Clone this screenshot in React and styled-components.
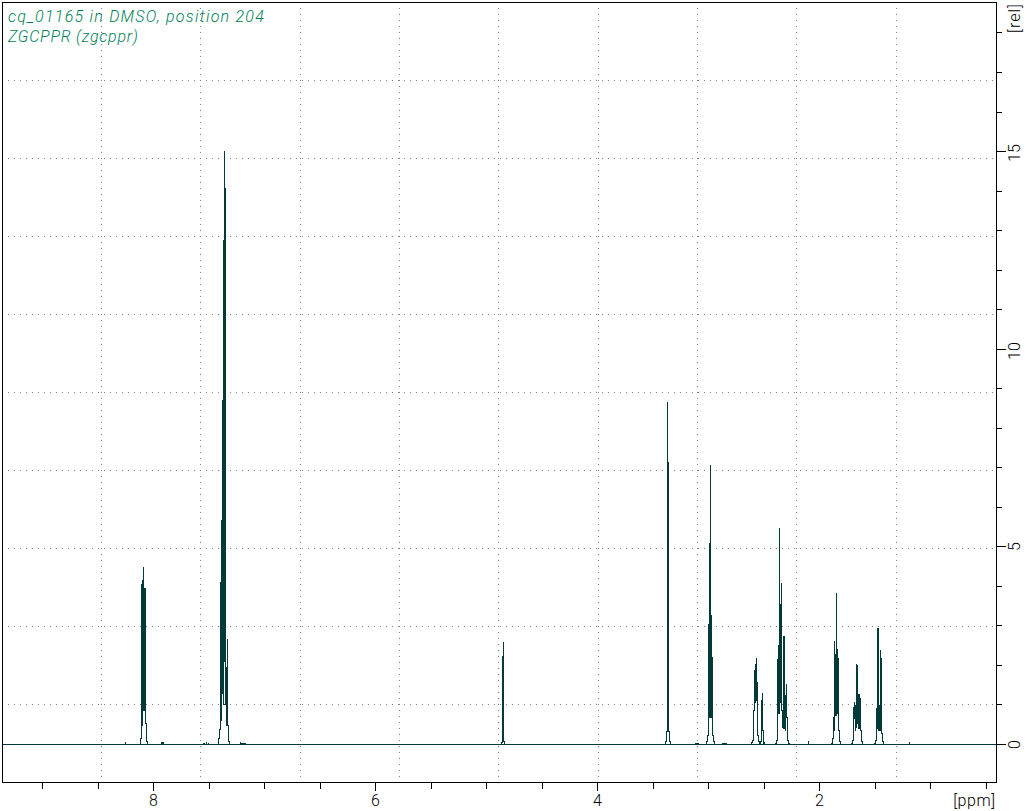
import React from "react";
import styled, { createGlobalStyle } from "styled-components";

const GlobalStyle = createGlobalStyle`
  html, body {
    margin: 0;
    padding: 0;
    background: #fff;
  }
`;

const Plot = styled.main`
  position: relative;
  width: 1027px;
  height: 811px;
  overflow: hidden;
  background: #fff;
`;

const Chart = styled.svg`
  display: block;
  width: 1027px;
  height: 811px;
  shape-rendering: crispEdges;
`;

const Caption = styled.header`
  position: absolute;
  top: 7px;
  left: 8px;
  font-family: Roboto, "Liberation Sans", sans-serif;
  font-size: 16px;
  font-style: italic;
  font-weight: 300;
  line-height: 20px;
  color: #007f58;
  white-space: nowrap;
`;

const CaptionLine = styled.div`
  letter-spacing: ${(p) => p.$spacing}px;
`;

const GridLine = styled.line`
  stroke: #808080;
  stroke-width: 1;
  stroke-dasharray: 1 5;
`;

const AxisLine = styled.path`
  fill: none;
  stroke: #000;
  stroke-width: 1;
`;

const Trace = styled.path`
  fill: none;
  stroke: #033a39;
  stroke-width: 1;
`;

const AxisLabel = styled.text`
  font-family: Roboto, "Liberation Sans", sans-serif;
  font-size: 16px;
  font-weight: 300;
  letter-spacing: ${(p) => p.$spacing || 0}px;
  fill: #000;
  text-anchor: middle;
`;

const BASE = 744;
const gridX = [101, 200, 300, 399, 498, 598, 697, 796, 896];
const gridY = [80, 158, 236, 314, 392, 470, 548, 626, 704];
const ppmLabels = { 2: "8", 6: "6", 10: "4", 14: "2" };
const relLabels = { 0: "0", 5: "5", 10: "10", 15: "15" };

// x, top, bottom of every pixel column that leaves the baseline
const columns = [
  [125, 742, 744],
  [140, 738, 744], [141, 584, 738], [142, 580, 725], [143, 567, 710], [144, 588, 710], [145, 588, 723], [146, 723, 741], [147, 741, 744],
  [161, 742, 744], [162, 742, 744], [163, 742, 744],
  [203, 743, 744], [204, 743, 744], [206, 742, 744], [208, 743, 744],
  [218, 738, 744], [219, 729, 738], [220, 582, 729], [221, 520, 720], [222, 400, 693], [223, 240, 704], [224, 151, 661], [224, 704, 704], [225, 188, 704], [226, 667, 725], [227, 639, 725], [228, 725, 741], [229, 741, 744],
  [240, 742, 744], [241, 743, 744], [242, 743, 744], [243, 743, 744], [244, 743, 744], [245, 743, 744],
  [501, 742, 744], [502, 656, 742], [503, 642, 741], [504, 741, 744],
  [665, 741, 744], [666, 731, 741], [667, 402, 731], [668, 462, 731], [669, 731, 741], [670, 741, 744],
  [695, 743, 744], [696, 743, 744], [697, 743, 744], [698, 743, 744],
  [706, 741, 744], [707, 735, 741], [708, 624, 735], [709, 543, 717], [710, 465, 717], [711, 615, 717], [712, 657, 735], [713, 735, 741], [714, 741, 744],
  [722, 743, 744], [723, 743, 744], [724, 743, 744], [725, 743, 744], [726, 743, 744],
  [751, 742, 744], [752, 740, 742], [753, 710, 740], [754, 670, 710], [755, 664, 702], [756, 658, 700], [757, 682, 735], [758, 735, 741], [759, 741, 743],
  [760, 741, 744], [761, 700, 741], [762, 693, 730], [763, 730, 743], [764, 742, 744],
  [775, 743, 744], [776, 740, 743], [777, 659, 740], [778, 645, 713], [779, 528, 713], [780, 604, 702], [781, 583, 710], [782, 710, 727], [783, 636, 728], [784, 636, 728], [785, 695, 730], [786, 684, 717], [787, 717, 740], [788, 740, 743], [789, 743, 744],
  [808, 741, 744],
  [831, 743, 744], [832, 738, 743], [833, 717, 738], [834, 641, 730], [835, 654, 715], [836, 593, 715], [837, 649, 713], [838, 658, 730], [839, 730, 741], [840, 741, 744],
  [851, 743, 744], [852, 740, 743], [853, 707, 740], [854, 702, 718], [855, 705, 730], [856, 664, 727], [857, 665, 723], [858, 694, 728], [859, 694, 728], [860, 698, 730], [861, 730, 741], [862, 741, 744],
  [874, 743, 744], [875, 740, 743], [876, 708, 740], [877, 628, 728], [878, 628, 730], [879, 705, 730], [880, 650, 730], [881, 658, 733], [882, 733, 741], [883, 741, 744],
  [909, 742, 744],
];

const tracePath =
  `M3 ${BASE + 0.5}H996` +
  columns.map(([x, top, bottom]) => `M${x + 0.5} ${top}V${bottom + 1}`).join("");

const ppmTick = (i) => 42 + Math.round(i * 55.5);
const relTick = (i) => BASE - Math.round(i * 39.53);

const axisPath = () => {
  let d = "M2.5 2.5H996.5V782.5H2.5Z";
  for (let i = 0; i < 18; i++) {
    const len = ppmLabels[i] ? 8 : 6;
    d += `M${ppmTick(i) + 0.5} 783v${len}`;
  }
  for (let i = 0; i < 19; i++) {
    const len = relLabels[i] ? 9 : 5;
    d += `M997 ${relTick(i) + 0.5}h${len}`;
  }
  return d;
};

const App = () => (
  <Plot>
    <GlobalStyle />
    <Chart viewBox="0 0 1027 811">
      {gridX.map((x) => (
        <GridLine key={x} x1={x + 0.5} x2={x + 0.5} y1={8} y2={777} />
      ))}
      {gridY.map((y) => (
        <GridLine key={y} x1={8} x2={993} y1={y + 0.5} y2={y + 0.5} />
      ))}
      <Trace d={tracePath} />
      <AxisLine d={axisPath()} />
      {Object.entries(ppmLabels).map(([i, label]) => (
        <AxisLabel key={i} x={ppmTick(Number(i)) + 0.5} y={806}>
          {label}
        </AxisLabel>
      ))}
      <AxisLabel x={974.5} y={806} $spacing={0.6}>
        [ppm]
      </AxisLabel>
      {Object.entries(relLabels).map(([i, label]) => {
        // the narrow "1" pulls two-digit labels off centre
        const y = relTick(Number(i)) + (label.length > 1 ? 2 : 0.5);
        return (
          <AxisLabel key={i} x={1020} y={y} transform={`rotate(-90 1020 ${y})`}>
            {label}
          </AxisLabel>
        );
      })}
      <AxisLabel x={1020} y={18} transform="rotate(-90 1020 18)" $spacing={1}>
        [rel]
      </AxisLabel>
    </Chart>
    <Caption>
      <CaptionLine $spacing={1.25}>cq_01165 in DMSO, position 204</CaptionLine>
      <CaptionLine $spacing={0.77}>ZGCPPR (zgcppr)</CaptionLine>
    </Caption>
  </Plot>
);

export default App;
